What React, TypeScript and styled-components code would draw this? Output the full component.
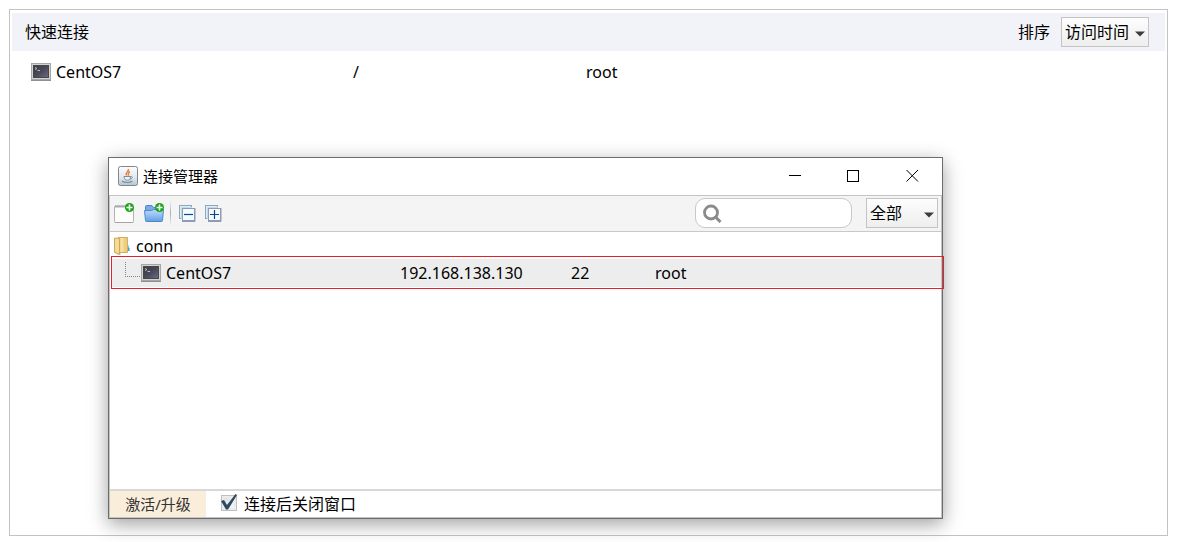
import React from 'react';
import styled, { createGlobalStyle } from 'styled-components';

const GlobalStyle = createGlobalStyle`
  * { box-sizing: border-box; }
  body {
    margin: 0;
    background: #fff;
    color: #000;
    font: 16px/22px "Noto Sans", "Noto Sans CJK SC", sans-serif;
  }
  button, input, select { font: inherit; color: inherit; margin: 0; }
  svg { display: block; flex: none; }
`;

const Page = styled.main`
  position: relative;
  display: flex;
  min-height: 100vh;
  padding: 9px 23px 6px 9px;
`;

const Pane = styled.section`
  flex: 1;
  padding: 3px 2px;
  border: 1px solid #c3c3c3;
`;

const PaneHeader = styled.header`
  display: flex;
  align-items: center;
  justify-content: space-between;
  height: 38px;
  padding: 0 16px 0 13px;
  background: #f2f3f8;
`;

const Heading = styled.h1`
  margin: 0;
  font-size: 16px;
  font-weight: 400;
`;

const SortLabel = styled.label`
  display: flex;
  align-items: center;
  gap: 11px;
`;

const SelectBox = styled.span<{ $width: number }>`
  position: relative;
  display: block;
  width: ${p => p.$width}px;
  height: 30px;
  svg {
    position: absolute;
    right: 4px;
    top: 14px;
    pointer-events: none;
  }
`;

const Select = styled.select`
  appearance: none;
  width: 100%;
  height: 100%;
  padding: 0 3px;
  border: 1px solid #c4c4c4;
  border-radius: 0;
  background: linear-gradient(#fdfdfd, #eeeeee);
  outline: none;
`;

const Table = styled.table`
  width: 100%;
  border-collapse: collapse;
  table-layout: fixed;
  td { padding: 0; }
`;

const QuickTable = styled(Table)`
  margin-top: 7px;
  tr { height: 28px; }
`;

const Col = styled.col<{ $width?: number }>`
  width: ${p => (p.$width ? `${p.$width}px` : 'auto')};
`;

const NameCell = styled.div<{ $indent: number }>`
  display: flex;
  align-items: center;
  gap: 5px;
  padding-left: ${p => p.$indent}px;
`;

const Dialog = styled.section`
  position: absolute;
  left: 108px;
  right: 248px;
  top: 157px;
  display: flex;
  flex-direction: column;
  min-height: 362px;
  border: 1px solid #6c6c6c;
  background: #fff;
  box-shadow: 0 5px 18px rgba(0, 0, 0, 0.38);
`;

const TitleBar = styled.header`
  display: flex;
  align-items: center;
  gap: 5px;
  height: 37px;
  padding: 0 0 2px 9px;
`;

const Title = styled.h2`
  flex: 1;
  margin: 0;
  font-size: 15px;
  font-weight: 400;
`;

const WindowButton = styled.button`
  display: flex;
  align-items: center;
  justify-content: center;
  width: 53px;
  height: 35px;
  padding: 0;
  border: 0;
  background: none;
`;

const WindowButtons = styled.div`
  display: flex;
  gap: 6px;
  padding-right: 3px;
`;

const Frame = styled.div`
  flex: 1;
  display: flex;
  flex-direction: column;
  border: 1px solid #c4c4c4;
`;

const Toolbar = styled.div`
  display: flex;
  align-items: center;
  height: 36px;
  padding: 0 3px 1px 4px;
  border-bottom: 1px solid #c8c8c8;
  background: #f4f4f4;
`;

const ToolGroup = styled.div<{ $gap: number }>`
  display: flex;
  align-items: center;
  gap: ${p => p.$gap}px;
`;

const ToolButton = styled.button`
  padding: 0;
  border: 0;
  background: none;
`;

const Separator = styled.span`
  width: 1px;
  height: 26px;
  margin: 0 8px 0 6px;
  background: linear-gradient(#f4f4f4, #a8aeb8, #f4f4f4);
`;

const SearchBox = styled.label`
  display: flex;
  align-items: center;
  width: 157px;
  height: 30px;
  margin: 0 14px 0 auto;
  padding: 0 8px 0 6px;
  border: 1px solid #c8c8c8;
  border-radius: 10px;
  background: #fff;
`;

const SearchInput = styled.input`
  flex: 1;
  min-width: 0;
  padding: 0 4px;
  border: 0;
  outline: none;
  background: none;
`;

const Tree = styled.div`
  flex: 1;
  padding-left: 1px;
`;

const FolderRow = styled.tr`
  height: 27px;
`;

const SelectedRow = styled.tr`
  position: relative;
  height: 28px;
  background: #ededed;
  &::after {
    content: "";
    position: absolute;
    inset: -3px -3px -2px 0;
    border: 1px solid #e8202a;
    pointer-events: none;
  }
`;

const BranchLine = styled.svg`
  align-self: flex-start;
  margin-right: -5px;
`;

const Footer = styled.footer`
  display: flex;
  align-items: stretch;
  gap: 14px;
  height: 28px;
  border-top: 2px solid #d8d8d8;
`;

const UpgradeButton = styled.button`
  width: 96px;
  padding: 0;
  border: 0;
  background: #faeedb;
  color: #333;
  font-size: 15px;
`;

const CheckLabel = styled.label`
  display: flex;
  align-items: center;
  gap: 6px;
`;

const CheckMark = styled.span`
  position: relative;
  width: 18px;
  height: 22px;
  svg { position: absolute; inset: 0; pointer-events: none; }
  input:not(:checked) + svg { display: none; }
`;

const Checkbox = styled.input`
  appearance: none;
  display: block;
  width: 16px;
  height: 16px;
  margin: 2px 1px;
  border: 1px solid #c0c0c0;
  background: linear-gradient(135deg, #dedede, #f8f8f8);
  box-shadow: inset 0 0 0 2px #ebebeb;
`;

const Arrow = () => (
  <svg width="10" height="6" viewBox="0 0 10 6">
    <path d="M0 0.5H10L5 5.5Z" fill="#3c3c3c" />
  </svg>
);

const BranchIcon = () => (
  <BranchLine width="16" height="16" viewBox="0 0 16 16" fill="none" stroke="#858585" strokeDasharray="1 1">
    <path d="M0.5 0V15M0 14.5H16" />
  </BranchLine>
);

const TerminalIcon = () => (
  <svg width="20" height="18" viewBox="0 0 20 18">
    <defs>
      <linearGradient id="screen" x1="0" y1="0" x2="1" y2="1">
        <stop offset="0" stopColor="#3a3a3e" />
        <stop offset="0.5" stopColor="#48485a" />
        <stop offset="1" stopColor="#6c6c86" />
      </linearGradient>
    </defs>
    <rect width="20" height="18" fill="#a6a6a6" />
    <rect x="1.5" y="1.5" width="17" height="14" fill="none" stroke="#d2d2d2" />
    <rect x="2.5" y="2.5" width="15" height="12" fill="url(#screen)" stroke="#47474a" />
    <path d="M4 4.5L6 5.5L4 6.5M6.5 7.5H9" stroke="#bdbdbd" fill="none" />
    <path d="M0 17.5H20" stroke="#8f8f8f" />
  </svg>
);

const JavaIcon = () => (
  <svg width="20" height="20" viewBox="0 0 20 20">
    <defs>
      <linearGradient id="java" x1="0" y1="0" x2="0" y2="1">
        <stop offset="0" stopColor="#fdfdfe" />
        <stop offset="0.6" stopColor="#dfe7ed" />
        <stop offset="1" stopColor="#b4c6d4" />
      </linearGradient>
    </defs>
    <rect x="0.5" y="0.5" width="19" height="19" rx="2" fill="url(#java)" stroke="#80868c" />
    <path d="M10.4 3C11.4 5.6 6.8 6.2 8.6 9.4M12 5.4C9.4 6.8 11.3 7.8 10 9.6" fill="none" stroke="#ea8240" strokeWidth="1.5" />
    <path d="M6 10.5H12.5C12.5 13.5 11.5 14.2 9.5 14.2S6.3 13.5 6 10.5ZM12.5 10.5C15 10 15 12.5 12 13" fill="#eef3f6" stroke="#7b8c9a" />
    <path d="M4 15C6.5 17 12 17 14.5 15" fill="none" stroke="#7b8c9a" strokeWidth="1.2" />
  </svg>
);

const PlusBadge = () => (
  <g>
    <circle cx="15.5" cy="4.5" r="4.5" fill="#18a513" />
    <path d="M15.5 1.5V7.5M12.5 4.5H18.5" stroke="#fff" strokeWidth="1.6" />
  </g>
);

const NewSessionIcon = () => (
  <svg width="20" height="21" viewBox="0 0 20 21">
    <rect x="0.5" y="3" width="19" height="16.5" rx="1" fill="#fdfdfd" stroke="#b2b2b2" />
    <path d="M1 3.5H19" stroke="#aaa" strokeWidth="2" />
    <path d="M1 19.5H19" stroke="#a5a5a5" />
    <PlusBadge />
  </svg>
);

const NewFolderIcon = () => (
  <svg width="20" height="21" viewBox="0 0 20 21">
    <defs>
      <linearGradient id="blueFolder" x1="0" y1="0" x2="0" y2="1">
        <stop offset="0" stopColor="#b7d5f6" />
        <stop offset="0.4" stopColor="#9cc5f2" />
        <stop offset="1" stopColor="#639de2" />
      </linearGradient>
    </defs>
    <path d="M1.5 8V3.5Q1.5 2.5 2.5 2.5H8L9.5 4.5H18.5V8" fill="#78aae6" stroke="#4d87d2" />
    <path d="M0.5 7.5H7.5L9.5 6.5H19.5L18.5 17.5Q18.5 18.5 17.5 18.5H2.5Q1.5 18.5 1.5 17.5Z" fill="url(#blueFolder)" stroke="#4c86d2" />
    <PlusBadge />
  </svg>
);

const LayersIcon = ({ plus = false }: { plus?: boolean }) => (
  <svg width="17" height="17" viewBox="0 0 17 17">
    <rect x="0.5" y="0.5" width="12" height="13" fill="#d4f1fc" stroke="#93a3b8" />
    <path d="M2.5 14V2.5H13" fill="none" stroke="#c3d9e8" />
    <rect x="3.5" y="3.5" width="12" height="12" fill="#f4fbfe" stroke="#8e9bb2" />
    <path d="M16 3V16.5H3" fill="none" stroke="#8e9bb2" />
    <path d={plus ? 'M5 9.5H14M9.5 5V14' : 'M5 9.5H14'} stroke="#0b4a80" strokeWidth="1.2" />
  </svg>
);

const SearchIcon = () => (
  <svg width="20" height="20" viewBox="0 0 20 20" fill="none" stroke="#8b8b8b">
    <circle cx="9" cy="9.5" r="6.5" strokeWidth="2.8" />
    <path d="M13.5 14L18.5 19" strokeWidth="3" />
  </svg>
);

const FolderIcon = () => (
  <svg width="18" height="20" viewBox="0 0 18 20">
    <path d="M0 16H8V19H5Z" fill="#b9b9b9" opacity="0.5" />
    <path d="M5 1.5H14.5V16.5H5Z" fill="#edcd80" stroke="#d3ac60" />
    <path d="M7.5 2H10.5V16H7.5Z" fill="#f6e0a4" />
    <path d="M1.5 2L6.5 2.5V18.5L1.5 16Z" fill="#f5dc96" stroke="#cfa85c" />
    <path d="M15 9H16V15H15Z" fill="#9fdcf5" />
    <path d="M15 11L16.5 12V15H15Z" fill="#2aa5e6" />
  </svg>
);

export default function App() {
  return (
    <>
      <GlobalStyle />
      <Page>
        <Pane>
          <PaneHeader>
            <Heading>快速连接</Heading>
            <SortLabel>
              排序
              <SelectBox $width={88}>
                <Select defaultValue="time">
                  <option value="time">访问时间</option>
                </Select>
                <Arrow />
              </SelectBox>
            </SortLabel>
          </PaneHeader>
          <QuickTable>
            <colgroup>
              <Col $width={341} />
              <Col $width={233} />
              <Col />
            </colgroup>
            <tbody>
              <tr>
                <td><NameCell $indent={19}><TerminalIcon />CentOS7</NameCell></td>
                <td>/</td>
                <td>root</td>
              </tr>
            </tbody>
          </QuickTable>
        </Pane>

        <Dialog role="dialog" aria-label="连接管理器">
          <TitleBar>
            <JavaIcon />
            <Title>连接管理器</Title>
            <WindowButtons>
              <WindowButton aria-label="最小化">
                <svg width="13" height="13" viewBox="0 0 13 13" stroke="#000"><path d="M1 6.5H13" /></svg>
              </WindowButton>
              <WindowButton aria-label="最大化">
                <svg width="13" height="13" viewBox="0 0 13 13" stroke="#000" fill="none"><rect x="0.5" y="1.5" width="11" height="11" /></svg>
              </WindowButton>
              <WindowButton aria-label="关闭">
                <svg width="13" height="13" viewBox="0 0 13 13" stroke="#000"><path d="M0.5 1L12 12.5M12 1L0.5 12.5" /></svg>
              </WindowButton>
            </WindowButtons>
          </TitleBar>
          <Frame>
            <Toolbar>
              <ToolGroup $gap={10}>
                <ToolButton aria-label="新建连接"><NewSessionIcon /></ToolButton>
                <ToolButton aria-label="新建文件夹"><NewFolderIcon /></ToolButton>
              </ToolGroup>
              <Separator />
              <ToolGroup $gap={9}>
                <ToolButton aria-label="全部折叠"><LayersIcon /></ToolButton>
                <ToolButton aria-label="全部展开"><LayersIcon plus /></ToolButton>
              </ToolGroup>
              <SearchBox>
                <SearchIcon />
                <SearchInput type="text" aria-label="搜索" />
              </SearchBox>
              <SelectBox $width={72}>
                <Select defaultValue="all" aria-label="筛选">
                  <option value="all">全部</option>
                </Select>
                <Arrow />
              </SelectBox>
            </Toolbar>
            <Tree>
              <Table>
                <colgroup>
                  <Col $width={289} />
                  <Col $width={171} />
                  <Col $width={84} />
                  <Col />
                </colgroup>
                <tbody>
                  <FolderRow>
                    <td colSpan={4}><NameCell $indent={2}><FolderIcon />conn</NameCell></td>
                  </FolderRow>
                  <SelectedRow>
                    <td><NameCell $indent={14}><BranchIcon /><TerminalIcon />CentOS7</NameCell></td>
                    <td>192.168.138.130</td>
                    <td>22</td>
                    <td>root</td>
                  </SelectedRow>
                </tbody>
              </Table>
            </Tree>
            <Footer>
              <UpgradeButton>激活/升级</UpgradeButton>
              <CheckLabel>
                <CheckMark>
                  <Checkbox type="checkbox" defaultChecked />
                  <svg width="18" height="20" viewBox="0 0 18 20">
                    <path d="M1 8L4 7L7 12L15.5 1L17 2L8 16.5H6Z" fill="#2d4a63" />
                  </svg>
                </CheckMark>
                连接后关闭窗口
              </CheckLabel>
            </Footer>
          </Frame>
        </Dialog>
      </Page>
    </>
  );
}
